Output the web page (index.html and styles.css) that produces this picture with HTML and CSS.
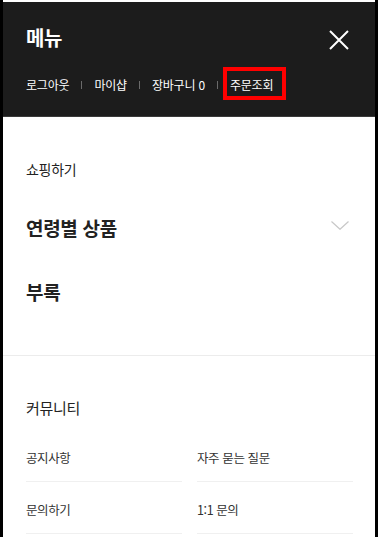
FILE: index.html
```html
<!DOCTYPE html>
<html lang="ko">
<head>
<meta charset="utf-8">
<link rel="stylesheet" href="styles.css">
</head>
<body>
<div class="panel">
  <header class="head">
    <div class="head-top">
      <h1 class="title">메뉴</h1>
      <svg class="close" width="20" height="20" viewBox="0 0 20 20"><path d="M1 1L19 19M19 1L1 19" stroke="#fff" stroke-width="2" fill="none"/></svg>
    </div>
    <nav class="links">
      <span class="link">로그아웃</span><span class="sep"></span>
      <span class="link">마이샵</span><span class="sep"></span>
      <span class="link">장바구니 0</span><span class="sep"></span>
      <span class="link marked">주문조회</span>
    </nav>
  </header>
  <section class="shop">
    <div class="sec-title">쇼핑하기</div>
    <div class="big-row">
      <span class="big">연령별 상품</span>
      <svg class="chev" width="18" height="9" viewBox="0 0 18 9"><path d="M0.5 0.5L9 8.3L17.5 0.5" stroke="#c8c8c8" stroke-width="1.2" fill="none"/></svg>
    </div>
    <div class="big-row"><span class="big">부록</span></div>
  </section>
  <section class="community">
    <div class="sec-title2">커뮤니티</div>
    <div class="grid">
      <div class="cell">공지사항</div>
      <div class="cell">자주 묻는 질문</div>
      <div class="cell">문의하기</div>
      <div class="cell">1:1 문의</div>
    </div>
  </section>
</div>
</body>
</html>
```
FILE: styles.css
```css
* { box-sizing: border-box; margin: 0; padding: 0; }
html, body { background: #000; }
body {
  margin: 0;
  font-family: "Noto Sans CJK KR", "Noto Sans", sans-serif;
  height: 537px;
  overflow: hidden;
}
.panel {
  margin-left: 3px;
  width: 372px;
  height: 537px;
  background: #fff;
  padding-top: 2px;
}
.head {
  background: #1c1c1c;
  height: 115px;
  border-bottom: 1px solid #3a3a3a;
}
.head-top {
  display: flex;
  justify-content: space-between;
  align-items: center;
  padding: 24px 26px 0 23px;
  height: 48px;
}
.title {
  color: #fff;
  font-size: 20px;
  font-weight: 700;
  line-height: 24px;
  letter-spacing: -0.3px;
}
.close { display: block; margin-top: 4px; }
.links {
  display: flex;
  align-items: center;
  padding: 27px 0 0 23px;
  color: #fff;
  font-size: 12px;
  line-height: 16px;
  letter-spacing: -0.2px;
}
.link { white-space: pre; }
.sep {
  display: inline-block;
  width: 1px;
  height: 8px;
  background: #6a6a6a;
  margin: 0 12px 0 12px;
}
.marked { position: relative; }
.marked::after {
  content: "";
  position: absolute;
  left: -7px;
  right: -13px;
  top: -10px;
  bottom: -7px;
  border: 4px solid #ff0000;
}
.shop {
  padding: 42px 26px 32px 23px;
  border-bottom: 1px solid #ececec;
}
.sec-title {
  font-size: 14px;
  line-height: 20px;
  color: #222;
  letter-spacing: -0.3px;
  margin-bottom: 16px;
}
.big-row {
  height: 64px;
  display: flex;
  align-items: center;
  justify-content: space-between;
}
.big {
  font-size: 19px;
  font-weight: 700;
  color: #222;
  letter-spacing: -0.3px;
}
.chev { display: block; margin-top: -3px; }
.community {
  padding: 42px 22px 0 23px;
}
.sec-title2 {
  font-size: 15px;
  line-height: 20px;
  color: #222;
  letter-spacing: -0.3px;
  margin-bottom: 12px;
}
.grid {
  display: grid;
  grid-template-columns: 156px 156px;
  column-gap: 15px;
}
.cell {
  font-size: 12.5px;
  line-height: 16px;
  color: #333;
  letter-spacing: -0.4px;
  padding: 20px 0 15px;
  border-bottom: 1px solid #f0f0f0;
}
```
